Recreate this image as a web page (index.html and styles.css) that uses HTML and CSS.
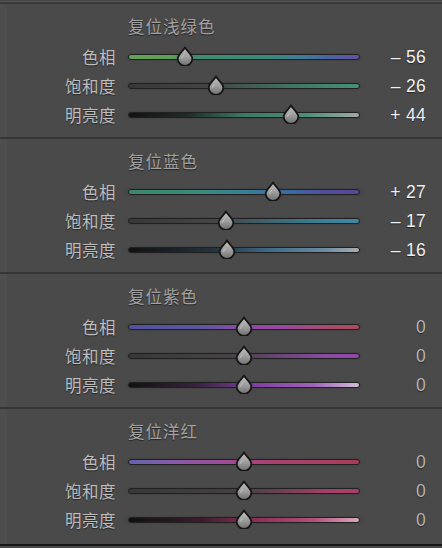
FILE: index.html
```html
<!DOCTYPE html>
<html lang="zh">
<head>
<meta charset="utf-8">
<title>HSL</title>
<link rel="stylesheet" href="styles.css">
</head>
<body>
<svg class="defs" width="0" height="0" aria-hidden="true">
  <defs>
    <linearGradient id="tg" x1="0" y1="0" x2="0" y2="1">
      <stop offset="0" stop-color="#c4c4c4"/>
      <stop offset="0.55" stop-color="#9c9c9c"/>
      <stop offset="1" stop-color="#6e6e6e"/>
    </linearGradient>
    <symbol id="thumb" viewBox="0 0 16 18">
      <path d="M8 1.2 C9.2 4 14.6 7.6 14.6 11.3 A6.6 6.6 0 0 1 1.4 11.3 C1.4 7.6 6.8 4 8 1.2 Z" fill="url(#tg)" stroke="#151515" stroke-width="1.6" stroke-linejoin="round"/>
      <path d="M5 11.5 A3 3 0 0 1 7 8.5" fill="none" stroke="#e0e0e0" stroke-width="0.8" opacity="0.6"/>
    </symbol>
  </defs>
</svg>
<div class="panel">
  <div class="topband"></div>

  <section class="group">
    <h2 class="title">复位浅绿色</h2>
    <div class="row">
      <span class="label">色相</span>
      <div class="track t-aq-h"><svg class="thumb" style="left:24.2%"><use href="#thumb"/></svg></div>
      <span class="value">– 56</span>
    </div>
    <div class="row">
      <span class="label">饱和度</span>
      <div class="track t-aq-s"><svg class="thumb" style="left:38.0%"><use href="#thumb"/></svg></div>
      <span class="value">– 26</span>
    </div>
    <div class="row">
      <span class="label">明亮度</span>
      <div class="track t-aq-l"><svg class="thumb" style="left:70.3%"><use href="#thumb"/></svg></div>
      <span class="value">+ 44</span>
    </div>
  </section>

  <section class="group">
    <h2 class="title">复位蓝色</h2>
    <div class="row">
      <span class="label">色相</span>
      <div class="track t-bl-h"><svg class="thumb" style="left:62.5%"><use href="#thumb"/></svg></div>
      <span class="value">+ 27</span>
    </div>
    <div class="row">
      <span class="label">饱和度</span>
      <div class="track t-bl-s"><svg class="thumb" style="left:42.2%"><use href="#thumb"/></svg></div>
      <span class="value">– 17</span>
    </div>
    <div class="row">
      <span class="label">明亮度</span>
      <div class="track t-bl-l"><svg class="thumb" style="left:42.6%"><use href="#thumb"/></svg></div>
      <span class="value">– 16</span>
    </div>
  </section>

  <section class="group">
    <h2 class="title">复位紫色</h2>
    <div class="row">
      <span class="label">色相</span>
      <div class="track t-pu-h"><svg class="thumb" style="left:50%"><use href="#thumb"/></svg></div>
      <span class="value zero">0</span>
    </div>
    <div class="row">
      <span class="label">饱和度</span>
      <div class="track t-pu-s"><svg class="thumb" style="left:50%"><use href="#thumb"/></svg></div>
      <span class="value zero">0</span>
    </div>
    <div class="row">
      <span class="label">明亮度</span>
      <div class="track t-pu-l"><svg class="thumb" style="left:50%"><use href="#thumb"/></svg></div>
      <span class="value zero">0</span>
    </div>
  </section>

  <section class="group">
    <h2 class="title">复位洋红</h2>
    <div class="row">
      <span class="label">色相</span>
      <div class="track t-mg-h"><svg class="thumb" style="left:50%"><use href="#thumb"/></svg></div>
      <span class="value zero">0</span>
    </div>
    <div class="row">
      <span class="label">饱和度</span>
      <div class="track t-mg-s"><svg class="thumb" style="left:50%"><use href="#thumb"/></svg></div>
      <span class="value zero">0</span>
    </div>
    <div class="row">
      <span class="label">明亮度</span>
      <div class="track t-mg-l"><svg class="thumb" style="left:50%"><use href="#thumb"/></svg></div>
      <span class="value zero">0</span>
    </div>
  </section>

  <div class="bottomband"></div>
</div>
</body>
</html>
```

FILE: styles.css
```css
* { box-sizing: border-box; }

html, body {
  margin: 0;
  padding: 0;
  background: #4a4a4a;
}

.defs {
  position: absolute;
  width: 0;
  height: 0;
  overflow: hidden;
}

.panel {
  width: 442px;
  height: 548px;
  background: #4a4a4a;
  display: flex;
  flex-direction: column;
  overflow: hidden;
}

.topband {
  height: 4px;
  flex: none;
  background: #444;
  border-top: 1px solid #454545;
  border-bottom: 2px solid #393939;
  box-shadow: inset 0 1px 0 #575757;
}

.group {
  height: 135px;
  flex: none;
  padding: 12px 0 0 0;
  border-bottom: 2px solid #363636;
  background: linear-gradient(to right, #4e4e4e 0, #4e4e4e 7px, #4a4a4a 7px);
}

.group:last-of-type {
  border-bottom: none;
}

.title {
  margin: 0 0 6px 128px;
  height: 20px;
  font: normal 16.5px/20px "Noto Sans CJK SC", "Noto Sans CJK JP", sans-serif;
  letter-spacing: 1px;
  color: #a2a2a2;
  text-shadow: 0 1px 1px rgba(0, 0, 0, 0.55);
}

.row {
  height: 29px;
  display: grid;
  grid-template-columns: 115px 232px 1fr;
  column-gap: 13px;
  align-items: center;
  padding-right: 16px;
}

.label {
  text-align: right;
  font: normal 16.5px/20px "Noto Sans CJK SC", "Noto Sans CJK JP", sans-serif;
  letter-spacing: 0.5px;
  color: #bdbdbd;
  text-shadow: 0 1px 1px rgba(0, 0, 0, 0.5);
  margin-right: -1px;
}

.value {
  text-align: right;
  font: normal 17.5px/20px "Liberation Sans", Arial, sans-serif;
  letter-spacing: 0.3px;
  color: #f0f0f0;
  white-space: pre;
  text-shadow: 0 1px 1px rgba(0, 0, 0, 0.5);
}

.value.zero {
  color: #b4b4b4;
}

.track {
  position: relative;
  height: 6px;
  border: 1px solid #202020;
  border-radius: 3px;
  box-shadow: 0 0 2px rgba(0, 0, 0, 0.25);
}

.thumb {
  position: absolute;
  top: -9px;
  width: 18px;
  height: 20px;
  transform: translateX(-50%);
  overflow: visible;
}

/* 浅绿色 */
.t-aq-h { background: linear-gradient(to right, #66a254 0%, #5e9e55 18%, #3f8d6f 27%, #3a8a7a 60%, #3e7d96 75%, #4a63a2 87%, #6352a0 100%); }
.t-aq-s { background: linear-gradient(to right, #383838 0%, #454545 35%, #3f7a69 75%, #44917a 100%); }
.t-aq-l { background: linear-gradient(to right, #131313 0%, #1f2b27 25%, #3b7a64 50%, #4e8f7a 78%, #a2aaa6 100%); }

/* 蓝色 */
.t-bl-h { background: linear-gradient(to right, #3d8a6c 0%, #3b8a80 35%, #3a7aa0 55%, #3c6aa0 70%, #5050a0 85%, #5a4494 100%); }
.t-bl-s { background: linear-gradient(to right, #383838 0%, #454545 38%, #3a7a8e 78%, #3f88a6 100%); }
.t-bl-l { background: linear-gradient(to right, #111 0%, #263440 38%, #3f6e8a 62%, #6c8ca0 85%, #aaaeb2 100%); }

/* 紫色 */
.t-pu-h { background: linear-gradient(to right, #4e52a0 0%, #5858a2 30%, #8a4ca6 50%, #9a48a2 66%, #a24a70 85%, #aa4c5c 100%); }
.t-pu-s { background: linear-gradient(to right, #383838 0%, #474247 45%, #8a4aa2 85%, #9446aa 100%); }
.t-pu-l { background: linear-gradient(to right, #111 0%, #38243f 30%, #7f40a2 55%, #a062ba 80%, #d2bcd8 100%); }

/* 洋红 */
.t-mg-h { background: linear-gradient(to right, #6464aa 0%, #8a5aaa 20%, #a04a92 45%, #a84272 60%, #a83c58 100%); }
.t-mg-s { background: linear-gradient(to right, #383838 0%, #474044 50%, #a0406a 85%, #a8406c 100%); }
.t-mg-l { background: linear-gradient(to right, #111 0%, #391c2a 30%, #8a3058 55%, #b05080 80%, #d8aab8 100%); }

.bottomband {
  flex: 1;
  border-top: 2px solid #161616;
  background: #4a4a4a;
}
```
